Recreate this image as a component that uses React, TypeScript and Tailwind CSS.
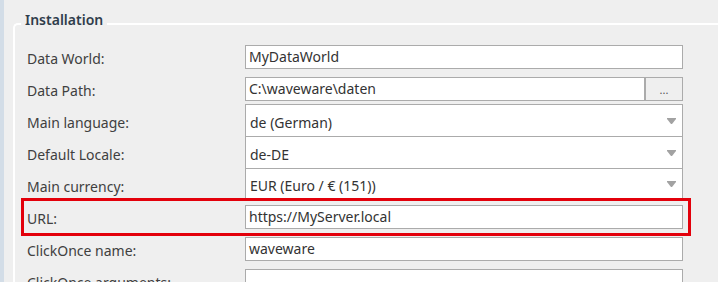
import React from "react";

const Arrow = () => (
  <svg width="9" height="6" viewBox="0 0 9 6" className="shrink-0">
    <polygon points="0,0 9,0 9,1 5,6 4,6 0,1" fill="#a2a2a2" />
  </svg>
);

function Row({ label, children, className = "" }: { label: string; children: React.ReactNode; className?: string }) {
  return (
    <div className={"flex h-[32px] " + className}>
      <div className="w-[218px] shrink-0 pt-[10px] text-[#404040] whitespace-nowrap">{label}</div>
      <div className="flex-1 h-full flex items-start">{children}</div>
    </div>
  );
}

function TextBox({ value = "" }: { value?: string }) {
  return (
    <div className="mt-[5px] h-[24px] w-full border border-[#ababab] bg-white pl-[3px] flex items-center text-[#333] whitespace-nowrap">
      {value}
    </div>
  );
}

function Combo({ value, last = false }: { value: string; last?: boolean }) {
  return (
    <div
      className={
        "h-[32px] w-full border-x border-t border-[#ababab] bg-white pl-[4px] pr-[6px] flex items-center justify-between text-[#333] whitespace-nowrap " +
        (last ? "border-b" : "")
      }
    >
      <span className="pt-[4px]">{value}</span>
      <Arrow />
    </div>
  );
}

export default function App() {
  return (
    <div className="w-[718px] h-[282px] bg-[#efefef] flex overflow-hidden font-['Noto_Sans',sans-serif] text-[14px] leading-[18px]">
      <div className="w-[4px] shrink-0 bg-[#d3dde7]" />
      <div className="flex-1 pl-[9px] pt-[23px]">
        <div className="relative h-full border-l-2 border-t-2 border-white rounded-tl-[5px] pt-[15px] pl-[12px] pr-[35px]">
          <div className="absolute left-[6px] top-[-14px] px-[4px] bg-[#efefef] font-semibold text-[#2f3d4c] leading-[18px]">
            Installation
          </div>
          <Row label="Data World:">
            <TextBox value="MyDataWorld" />
          </Row>
          <Row label="Data Path:">
            <div className="flex w-full">
              <TextBox value="C:\waveware\daten" />
              <div className="mt-[5px] h-[24px] w-[38px] shrink-0 border border-[#ababab] bg-[#efefef] flex items-end justify-center text-[11px] leading-[14px] text-[#555] pb-[3px]">
                ...
              </div>
            </div>
          </Row>
          <Row label="Main language:">
            <Combo value="de (German)" />
          </Row>
          <Row label="Default Locale:">
            <Combo value="de-DE" />
          </Row>
          <Row label="Main currency:">
            <Combo value="EUR (Euro / € (151))" last />
          </Row>
          <Row label="URL:" className="relative">
            <TextBox value="https://MyServer.local" />
            <div className="absolute left-[-6px] right-[-8px] top-[-2px] bottom-[-4px] border-[3px] border-[#e3000b] pointer-events-none" />
          </Row>
          <Row label="ClickOnce name:">
            <TextBox value="waveware" />
          </Row>
          <Row label="ClickOnce arguments:">
            <TextBox />
          </Row>
        </div>
      </div>
    </div>
  );
}
